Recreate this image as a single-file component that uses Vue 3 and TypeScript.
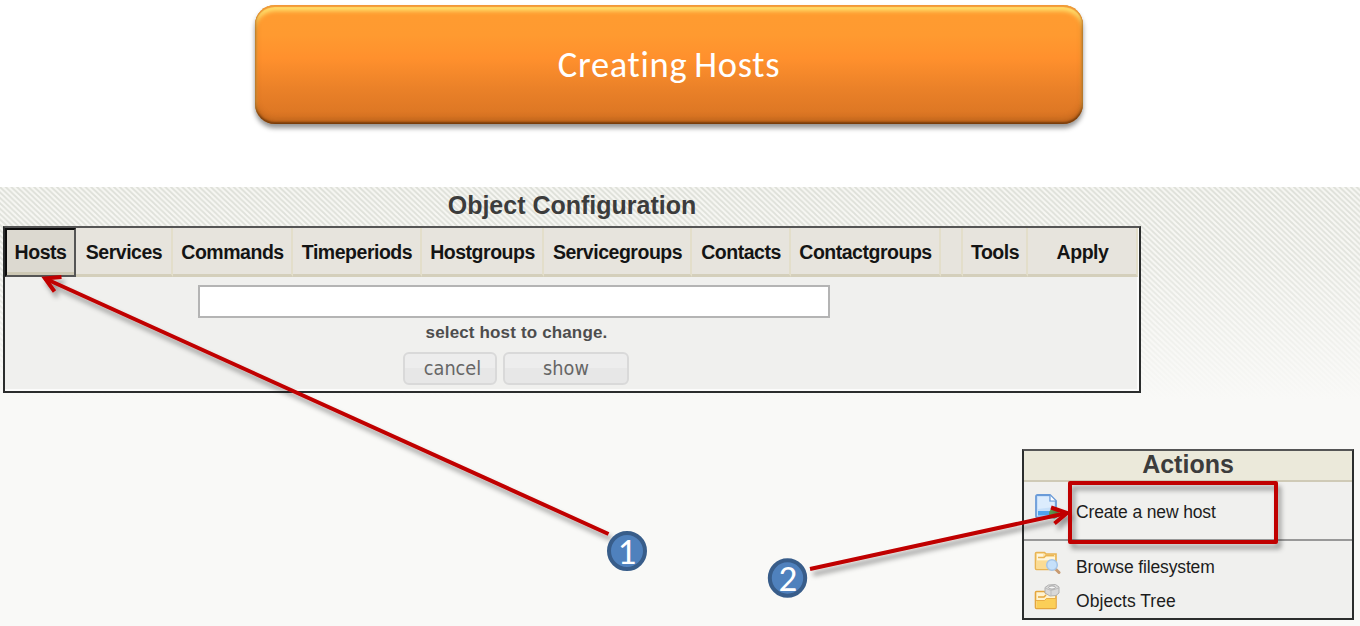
<script setup lang="ts">
interface Tab { label: string; width: number; active?: boolean }

const tabs: Tab[] = [
  { label: 'Hosts', width: 71, active: true },
  { label: 'Services', width: 97 },
  { label: 'Commands', width: 120 },
  { label: 'Timeperiods', width: 129 },
  { label: 'Hostgroups', width: 122 },
  { label: 'Servicegroups', width: 148 },
  { label: 'Contacts', width: 99 },
  { label: 'Contactgroups', width: 150 },
  { label: '', width: 22 },
  { label: 'Tools', width: 65 },
  { label: 'Apply', width: 110 },
]
</script>

<template>
  <div class="slide">
    <header class="banner">Creating Hosts</header>

    <main class="workspace">
      <div class="stripes">
        <svg width="1360" height="213">
          <defs>
            <pattern id="hatch" width="5.7" height="5.4" patternUnits="userSpaceOnUse">
              <path d="M-2.85 -2.7L8.55 8.1M-2.85 2.7L2.85 8.1M2.85 -2.7L8.55 2.7" stroke="#dddfd8" stroke-width="1.8" />
            </pattern>
            <linearGradient id="fade" x1="0" y1="0" x2="0" y2="1">
              <stop offset="0" stop-color="#f9f9f7" stop-opacity="0" />
              <stop offset=".35" stop-color="#f9f9f7" stop-opacity=".2" />
              <stop offset="1" stop-color="#f9f9f7" />
            </linearGradient>
          </defs>
          <rect width="1360" height="213" fill="#f7f7f3" />
          <rect width="1360" height="213" fill="url(#hatch)" />
          <rect width="1360" height="213" fill="url(#fade)" />
        </svg>
      </div>

      <h1 class="title">Object Configuration</h1>

      <section class="config">
        <nav class="tabs">
          <a
            v-for="(tab, i) in tabs"
            :key="i"
            class="tab"
            :class="{ active: tab.active }"
            :style="{ width: tab.width + 'px' }"
          >{{ tab.label }}</a>
        </nav>
        <div class="form">
          <input class="field" type="text" aria-label="host" />
          <div class="hint">select host to change.</div>
          <div class="buttons">
            <button class="cancel">cancel</button>
            <button class="show">show</button>
          </div>
        </div>
      </section>

      <section class="actions">
        <h2>Actions</h2>
        <div class="action first">
          <svg class="icon" width="28" height="28" viewBox="0 0 28 28">
            <path d="M4.500 3H17l6 6v15q0 1.500-1.500 1.500h-17Q3 25.500 3 24V4.500Q3 3 4.500 3z" fill="#c7e0fa" stroke="#6a9bd8" stroke-width="1.800" stroke-linejoin="round" />
            <path d="M5 5h11v5h5v5L5 17z" fill="#dcecfd" />
            <path d="M17 3.500V9h5.500" fill="#fff" stroke="#6a9bd8" stroke-width="1.200" />
            <path d="M5 19h17v4.500H5z" fill="#4fa3ee" />
            <circle cx="21" cy="21.500" r="5" fill="#5d9b50" />
          </svg>
          <span>Create a new host</span>
        </div>
        <div class="action browse">
          <svg class="icon" width="28" height="28" viewBox="0 0 28 28">
            <path d="M2.500 18.500V3.500q0-1 1-1h8L13 4h10v14.500q0 1-1 1H3.500q-1 0-1-1z" fill="#fce6ae" stroke="#e9b453" stroke-width="1.600" />
            <path d="M4 4h6v3h12v3H4z" fill="#fff6dc" />
            <path d="M5 7.500h6l2-2h8" fill="none" stroke="#e9b453" stroke-width="1.400" />
            <path d="M3.500 11H22v7.500H3.500z" fill="#fbdc94" />
            <path d="M22.500 19l3.500 3.500" stroke="#c89a70" stroke-width="3" stroke-linecap="round" />
            <circle cx="19" cy="15" r="5.300" fill="#c5e0fa" stroke="#a5c5e8" stroke-width="1.500" />
          </svg>
          <span>Browse filesystem</span>
        </div>
        <div class="action tree">
          <svg class="icon" width="28" height="28" viewBox="0 0 28 28">
            <path d="M2.500 23.500V8.500q0-1 1-1h8L13 9.500h10v14q0 1-1 1H3.500q-1 0-1-1z" fill="#fff3cf" stroke="#e5a63c" stroke-width="1.600" />
            <path d="M3.500 16h8l2-2h9v10h-19z" fill="#fbcf57" />
            <path d="M5 13h6l2-2" fill="none" stroke="#e5a63c" stroke-width="1.500" />
            <path d="M3 16.500h8.500l2-2H23" fill="none" stroke="#e9ae45" stroke-width="1" />
            <path d="M12 3.500L15.500 1l7-.5L26 3v6l-3 2.500-6 .5-5-3z" fill="#d8d8d8" stroke="#b0b0b0" />
            <path d="M12 4l6 2.500L26 4M18 6.500V12" fill="none" stroke="#bcbcbc" />
            <ellipse cx="19" cy="3.500" rx="3.300" ry="1.600" fill="#f7f7f7" stroke="#a5a5a5" />
          </svg>
          <span>Objects Tree</span>
        </div>
      </section>
    </main>

    <svg class="callouts" width="1360" height="626">
      <defs>
        <filter id="shadow" x="-10%" y="-10%" width="120%" height="130%">
          <feDropShadow dx="3" dy="5" stdDeviation="2.500" flood-color="#000" flood-opacity=".38" />
        </filter>
      </defs>
      <g fill="none" stroke="#c00000" stroke-width="4" filter="url(#shadow)">
        <path d="M608.500 534L45 278.500" />
        <path d="M61.500 277L45 278.500L54.500 291.500" />
      </g>
      <g fill="none" stroke="#c00000" stroke-width="4" filter="url(#shadow)">
        <path d="M810 569L1067 513" />
        <path d="M1051 507.500L1067 513L1054.500 523.500" />
      </g>
      <rect x="1070" y="483" width="206" height="59" fill="none" stroke="#c00000" stroke-width="4" stroke-linejoin="round" filter="url(#shadow)" />
      <g fill="#4f81bd" stroke="#385d8a" stroke-width="4">
        <circle cx="627" cy="551" r="18" />
        <circle cx="787.500" cy="578" r="17.700" />
      </g>
      <g class="numbers">
        <text x="627" y="563.500">1</text>
        <text x="788" y="590.500">2</text>
      </g>
    </svg>
  </div>
</template>

<style>
body { margin: 0; overflow: hidden; }
</style>

<style scoped>
* { box-sizing: border-box; }
.slide {
  position: relative;
  width: 1360px;
  height: 626px;
  padding-top: 5px;
  background: #fff;
  overflow: hidden;
  font-family: "Liberation Sans", Arial, sans-serif;
}
.banner {
  width: 828px;
  height: 119px;
  margin-left: 255px;
  border-radius: 20px;
  background: linear-gradient(#ff9c30 0%, #ff9a30 25%, #ff902d 45%, #e98028 72%, #d87322 100%);
  box-shadow:
    0 4px 5px rgba(0, 0, 0, .42),
    inset 0 -2px 2px rgba(90, 45, 5, .6),
    inset 0 -5px 6px rgba(120, 60, 10, .3),
    inset 0 2px 1px #f49a38,
    inset 0 6px 4px #ffdf6c,
    inset -1px 0 3px rgba(120, 60, 10, .6),
    inset 1px 0 3px rgba(120, 60, 10, .4);
  color: #fff;
  font-family: Carlito, "Open Sans", sans-serif;
  font-size: 36.500px;
  letter-spacing: .7px;
  word-spacing: -2px;
  line-height: 120px;
  text-align: center;
}
.workspace {
  position: relative;
  height: 439px;
  margin-top: 63px;
  background: #f9f9f7;
}
.stripes { position: absolute; inset: 0 0 auto; height: 213px; }
.title {
  position: relative;
  width: 1144px;
  height: 39px;
  margin: 0;
  color: #3c3c3c;
  font-size: 25px;
  line-height: 36px;
  text-align: center;
}
.config {
  position: relative;
  width: 1138px;
  height: 167px;
  margin-left: 3px;
  border: 2px solid #2b2d2d;
  border-top-color: #555;
  background: #f0f0ee;
  box-shadow: inset -2px -2px #fcfcfb;
}
.tabs {
  display: flex;
  height: 49px;
}
.tab {
  flex: none;
  padding-left: 1px;
  border-right: 2px solid #e3deca;
  border-bottom: 3px solid #d4cfbb;
  background: #e7e4dd;
  color: #141414;
  font-size: 19.500px;
  font-weight: bold;
  letter-spacing: -.48px;
  line-height: 49px;
  text-align: center;
  white-space: nowrap;
}
.tab.active {
  padding-left: 0;
  border: 2px solid #555;
  border-top-color: #0c0c0c;
  border-left-color: #0c0c0c;
  background: #dcd9d0;
  box-shadow: inset 0 -3px #cdc8b4;
  line-height: 45px;
}
.form { display: flex; flex-direction: column; padding-top: 8px; }
.field {
  width: 632px;
  height: 33px;
  margin-left: 193px;
  border: 2px solid #b4b4b4;
  background: #fff;
}
.hint {
  width: 1023px;
  height: 34px;
  color: #4d4d4d;
  font-size: 17px;
  font-weight: bold;
  letter-spacing: .15px;
  line-height: 29px;
  text-align: center;
}
.buttons { display: flex; gap: 6px; margin-left: 398px; }
.buttons button {
  height: 33px;
  padding: 0;
  border: 2px solid #d9d9d9;
  border-radius: 6px;
  background: linear-gradient(#ededed 0 48%, #e7e7e7 49% 100%);
  color: #666;
  font-family: "DejaVu Sans Condensed", "DejaVu Sans", sans-serif;
  font-stretch: condensed;
  font-size: 19.700px;
  line-height: 28px;
}
.buttons .cancel { width: 94px; padding-left: 5px; }
.buttons .show { width: 126px; }
.actions {
  position: relative;
  width: 332px;
  height: 171px;
  margin: 56px 0 0 1022px;
  border: 2px solid #2b2d2d;
  border-top-color: #555;
  background: #f0f0ee;
}
.actions h2 {
  height: 31px;
  margin: 0;
  border-bottom: 2px solid #cfcab6;
  background: #ebe9da;
  color: #3c3c3c;
  font-size: 25px;
  line-height: 27px;
  text-align: center;
}
.action {
  display: flex;
  height: 34px;
  color: #1c1c1c;
  font-size: 17.500px;
  letter-spacing: -.14px;
  line-height: 34px;
}
.icon { flex: none; margin-left: 9px; }
.action span { margin-left: 15px; }
.action.first { height: 59px; border-bottom: 2px solid #989898; line-height: 60px; }
.action.first .icon { margin-top: 10px; }
.action.browse { margin-top: 9px; }
.action.tree span { letter-spacing: .05px; }
.callouts { position: absolute; inset: 0 auto auto 0; }
.numbers {
  fill: #fff;
  font-family: Carlito, "Open Sans", sans-serif;
  font-size: 37px;
  text-anchor: middle;
}
</style>
